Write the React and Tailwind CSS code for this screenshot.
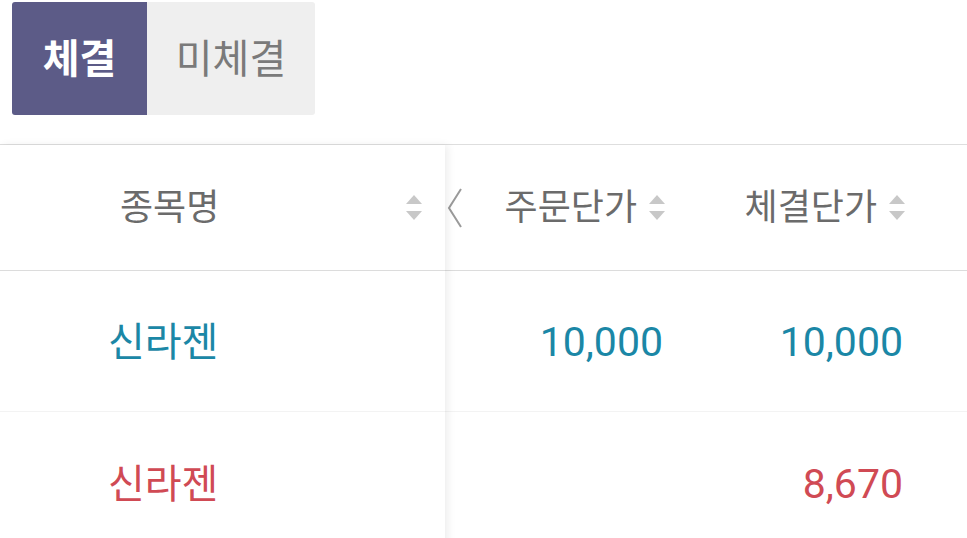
import React from 'react'

const font = { fontFamily: 'Roboto, "Noto Sans CJK KR", sans-serif' }

function SortIcon() {
  return (
    <svg width="16" height="26" viewBox="0 0 16 26" className="shrink-0">
      <path d="M8 0 L16 9 L0 9 Z" fill="#c8c8c8" />
      <path d="M0 16 L16 16 L8 25 Z" fill="#c8c8c8" />
    </svg>
  )
}

function Chevron() {
  return (
    <svg width="16" height="40" viewBox="0 0 16 40" className="shrink-0">
      <path d="M14 1 L2 20 L14 39" fill="none" stroke="#9a9a9a" strokeWidth="2" />
    </svg>
  )
}

const rows = [
  { name: '신라젠', order: '10,000', fill: '10,000', color: 'text-[#1b87a6]' },
  { name: '신라젠', order: '', fill: '8,670', color: 'text-[#d04a54]' },
]

export default function App() {
  return (
    <div className="w-[967px] h-[538px] overflow-hidden bg-white" style={font}>
      {/* tabs */}
      <div className="flex pt-[2px] pl-[12px] mb-[29px]">
        <button className="h-[113px] w-[135px] pt-[2px] rounded-l-[3px] bg-[#5c5b87] text-white text-[40px] font-bold">
          체결
        </button>
        <button className="h-[113px] w-[168px] pt-[2px] rounded-r-[3px] bg-[#efefef] text-[#7a7a7a] text-[40px]">
          미체결
        </button>
      </div>

      {/* table */}
      <div className="flex border-t border-[#dedede]">
        <div className="w-[445px] shrink-0 relative z-10 bg-white shadow-[3px_0_8px_rgba(0,0,0,0.07)]">
          <div className="h-[126px] flex items-center border-b border-[#dcdcdc] pl-[120px] pr-[23px]">
            <span className="text-[36px] text-[#6b6b6b]">종목명</span>
            <span className="ml-auto"><SortIcon /></span>
          </div>
          {rows.map((r, i) => (
            <div
              key={i}
              className={`flex items-center pl-[108px] pt-[4px] text-[40px] ${r.color} ${i === 0 ? 'h-[141px] border-b border-[#f3f3f3]' : 'h-[142px]'}`}
            >
              {r.name}
            </div>
          ))}
        </div>

        <div className="flex-1">
          <div className="h-[126px] flex items-center border-b border-[#dcdcdc]">
            <div className="w-[280px] flex items-center pl-[2px] pr-[60px]">
              <Chevron />
              <span className="ml-auto text-[36px] text-[#6b6b6b]">주문단가</span>
              <span className="ml-[12px]"><SortIcon /></span>
            </div>
            <div className="flex-1 flex items-center justify-end pr-[62px]">
              <span className="text-[36px] text-[#6b6b6b]">체결단가</span>
              <span className="ml-[12px]"><SortIcon /></span>
            </div>
          </div>
          {rows.map((r, i) => (
            <div
              key={i}
              className={`flex items-center text-[41px] pt-[4px] ${r.color} ${i === 0 ? 'h-[141px] border-b border-[#f3f3f3]' : 'h-[142px]'}`}
            >
              <div className="w-[280px] text-right pr-[62px]">{r.order}</div>
              <div className="flex-1 text-right pr-[64px]">{r.fill}</div>
            </div>
          ))}
        </div>
      </div>
    </div>
  )
}
